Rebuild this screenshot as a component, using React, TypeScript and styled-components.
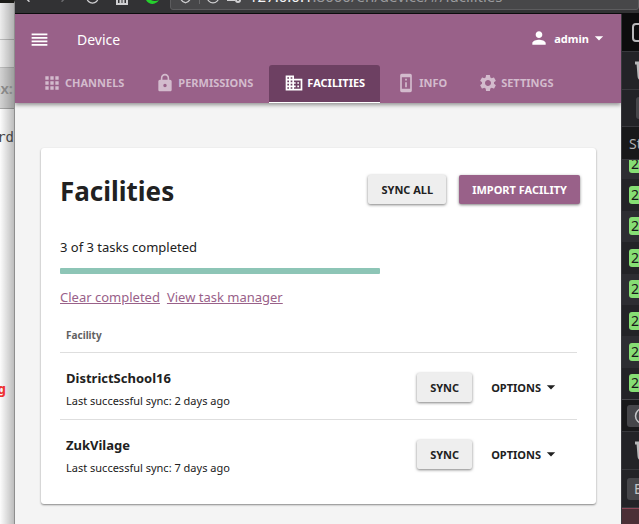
import React from 'react';
import styled, { createGlobalStyle } from 'styled-components';
import {
  MdApps, MdArrowDropDown, MdBusiness, MdLock, MdPermDeviceInformation, MdPerson, MdReorder, MdSettings,
} from 'react-icons/md';
import { ArrowLeft, ArrowRight, Info, RotateCw, Shield } from 'lucide-react';

const brand = '#996189';
const ink = '#212121';

const GlobalStyle = createGlobalStyle`
  *, *::before, *::after { box-sizing: border-box; }
  body { margin: 0; font-family: "Noto Sans", sans-serif; font-size: 13px; color: ${ink}; background: #f4f4f4; }
  button { font-family: inherit; margin: 0; border: 0; cursor: pointer; }
  h1, h2, p { margin: 0; }
  svg { flex: none; }
`;

const Desktop = styled.div`
  display: grid;
  grid-template-columns: 15px minmax(0, 1fr);
  height: 100vh;
  overflow: hidden;
`;

/* Window behind, mostly covered */
const BackWindow = styled.aside`
  display: flex;
  flex-direction: column;
  border-top: 3px solid #1c1c18;
  border-right: 1px solid #8e8e8e;
  background: linear-gradient(to right, transparent, rgba(0, 0, 0, 0.25)), #fcfcfc;
  overflow: hidden;
`;
const BackBar = styled.div<{ $h: number; $dark?: boolean }>`
  display: flex;
  align-items: center;
  justify-content: flex-end;
  flex: none;
  height: ${p => p.$h}px;
  background: ${p => (p.$dark ? 'rgba(0, 0, 0, 0.16)' : 'rgba(0, 0, 0, 0.06)')};
  border-bottom: 1px solid rgba(0, 0, 0, 0.2);
  color: #888;
  font-weight: 600;
  font-size: 15px;
  padding-right: 1px;
`;
const BackText = styled.p<{ $alert?: boolean }>`
  display: flex;
  justify-content: flex-end;
  flex: none;
  height: ${p => (p.$alert ? 20 : 271)}px;
  padding: ${p => (p.$alert ? '0 8px 0 0' : '19px 0 0')};
  font: ${p => (p.$alert ? 'bold' : 'normal')} 14px/18px "DejaVu Sans Mono", monospace;
  color: ${p => (p.$alert ? '#e33' : '#444')};
`;

const Window = styled.div`
  display: flex;
  flex-direction: column;
  min-width: 0;
`;
const Chrome = styled.div`
  display: flex;
  align-items: flex-end;
  flex: none;
  height: 14px;
  overflow: hidden;
  background: #323234;
  border-bottom: 1px solid #0c0c0d;
  color: #d0d0d2;
`;
const ChromeTools = styled.div`
  display: flex;
  align-items: flex-end;
  justify-content: space-between;
  flex: none;
  width: 155px;
  padding: 0 9px 8px 5px;
`;
const ChromeButton = styled.button<{ $dim?: boolean }>`
  display: flex;
  padding: 0;
  background: none;
  color: ${p => (p.$dim ? '#6c6c6f' : '#d0d0d2')};
`;
const UrlBar = styled.div`
  display: flex;
  align-items: flex-end;
  flex: 1;
  gap: 6px;
  height: 32px;
  margin-bottom: 3px;
  padding: 0 7px 5px;
  background: #474749;
  border: 1px solid #5c5c5e;
  border-radius: 3px;
  overflow: hidden;
`;
const UrlDivider = styled.span`
  width: 1px;
  height: 20px;
  background: #6a6a6c;
`;
const Url = styled.span`
  margin-left: 2px;
  font-size: 15px;
  line-height: 16px;
  color: #9b9b9e;
  white-space: nowrap;
`;
const UrlHost = styled.span`
  color: #f4f4f6;
`;

const Body = styled.div`
  display: flex;
  flex: 1;
  min-height: 0;
`;
const Page = styled.div`
  flex: 1;
  min-width: 0;
  background: #f4f4f4;
  overflow: hidden;
`;

const AppBar = styled.header`
  background: ${brand};
  color: #fff;
  box-shadow: 0 2px 4px rgba(0, 0, 0, 0.4);
`;
const Toolbar = styled.div`
  display: flex;
  align-items: center;
  height: 51px;
  padding: 0 12px 0 14px;
`;
const IconButton = styled.button`
  display: flex;
  padding: 0;
  color: inherit;
  background: none;
`;
const AppTitle = styled.h2`
  flex: 1;
  margin-left: 27px;
  font-size: 14px;
  font-weight: 400;
`;
const UserButton = styled.button`
  display: flex;
  align-items: center;
  gap: 5px;
  height: 30px;
  margin-bottom: 3px;
  padding: 0;
  background: none;
  color: #fff;
  font-size: 11px;
  font-weight: 700;
`;
const UserName = styled.span`
  display: flex;
  align-items: center;
`;

const Tabs = styled.nav`
  display: flex;
  gap: 1px;
  padding-left: 12px;
`;
const Tab = styled.a<{ $active?: boolean }>`
  display: flex;
  align-items: center;
  gap: 3px;
  height: 38px;
  padding: 0 15px 2px;
  border-radius: 3px 3px 0 0;
  border-bottom: 1px solid ${p => (p.$active ? '#fff' : 'transparent')};
  background: ${p => (p.$active ? '#6d4062' : 'transparent')};
  color: ${p => (p.$active ? '#fff' : '#d3bbcd')};
  font-size: 11px;
  font-weight: 700;
  text-decoration: none;
  white-space: nowrap;
`;

const Card = styled.main`
  margin: 45px 25px 20px 26px;
  padding: 27px 16px 18px 19px;
  background: #fff;
  border-radius: 3px;
  box-shadow: 0 1px 2px rgba(0, 0, 0, 0.45);
`;
const CardHeader = styled.div`
  display: flex;
  align-items: flex-start;
  gap: 13px;
`;
const Title = styled.h1`
  flex: 1;
  font-size: 26px;
  line-height: 32px;
`;
const Button = styled.button<{ $primary?: boolean }>`
  height: 29px;
  padding: 0 13px;
  border-radius: 2px;
  background: ${p => (p.$primary ? brand : '#eee')};
  color: ${p => (p.$primary ? '#fff' : ink)};
  box-shadow: 0 1px 3px rgba(0, 0, 0, 0.5);
  font-size: 11px;
  font-weight: 700;
  white-space: nowrap;
`;
const FlatButton = styled.button`
  display: flex;
  align-items: center;
  height: 29px;
  padding: 0;
  background: none;
  color: ${ink};
  font-size: 11px;
  font-weight: 700;
`;
const Status = styled.p`
  margin-top: 30px;
  line-height: 20px;
`;
const Progress = styled.div`
  width: 320px;
  max-width: 100%;
  height: 6px;
  margin-top: 11px;
  border-radius: 1px;
  background: #8dc5b6;
`;
const Links = styled.div`
  display: flex;
  gap: 7px;
  margin-top: 13px;
  line-height: 20px;
`;
const Link = styled.a`
  color: ${brand};
`;

const Table = styled.table`
  width: calc(100% - 3px);
  margin-top: 12px;
  border-collapse: collapse;
`;
const HeadCell = styled.th`
  height: 33px;
  padding: 0 6px;
  color: #616161;
  font-size: 10px;
  text-align: left;
`;
const Row = styled.tr`
  border-top: 1px solid #dedede;
`;
const Cell = styled.td<{ $text?: boolean }>`
  height: 67px;
  padding: ${p => (p.$text ? 7 : 3)}px 6px 0;
`;
const Name = styled.div`
  font-weight: 700;
  line-height: 20px;
`;
const Note = styled.div`
  margin-top: 4px;
  font-size: 11px;
  line-height: 18px;
`;
const Actions = styled.div`
  display: flex;
  align-items: center;
  justify-content: flex-end;
  gap: 19px;
  padding-right: 10px;
`;

/* Developer tools panel docked right */
const DevTools = styled.aside`
  display: flex;
  flex-direction: column;
  flex: none;
  width: 18px;
  border-left: 1px solid #38383d;
  background: #232327;
  overflow: hidden;
`;
const Pane = styled.div<{ $h: number; $bg?: string; $inset?: number }>`
  display: flex;
  align-items: center;
  flex: none;
  height: ${p => p.$h}px;
  padding-left: ${p => p.$inset || 7}px;
  border-bottom: 1px solid #38383d;
  background: ${p => p.$bg || '#232327'};
  color: #b1b1b3;
  font-size: 14px;
  white-space: nowrap;
`;
const Requests = styled.div`
  display: flex;
  align-items: flex-end;
  flex: none;
  height: 240px;
  overflow: hidden;
  border-bottom: 1px solid #48484c;
`;
const RequestList = styled.div`
  display: flex;
  flex: 1;
  flex-direction: column;
  height: 251px;
`;
const Request = styled.div`
  display: flex;
  align-items: center;
  flex: 1;
  padding-left: 7px;
  &:nth-child(odd) { background: #2d2d32; }
`;
const Badge = styled.span`
  flex: none;
  width: 30px;
  height: 18px;
  padding-left: 2px;
  border-radius: 3px;
  background: #86de74;
  color: #18181a;
  font-size: 14px;
  line-height: 18px;
`;
const Field = styled.div`
  display: flex;
  align-items: center;
  flex: none;
  width: 40px;
  height: 22px;
  padding-left: 7px;
  border-radius: 3px;
  background: #46464a;
  color: #c4c4c6;
`;
const ErrorPane = styled.div`
  flex: 1;
  border-top: 1px solid #8c4656;
  background: #4b2f36;
`;

const Moon = () => (
  <svg width="18" height="18" viewBox="0 0 18 18">
    <path d="M3 6a7 7 0 1 0 13 7A9 9 0 0 1 3 6z" fill="#25d02d" />
  </svg>
);
const HomeBase = () => (
  <svg width="14" height="16" viewBox="0 0 14 16">
    <path d="M2 6v9h10V6M5.500 15v-5h3v5" fill="none" stroke="currentColor" strokeWidth="2" />
  </svg>
);
const Sliders = () => (
  <svg width="15" height="14" viewBox="0 0 15 14" fill="none" stroke="currentColor" strokeWidth="2">
    <path d="M6 4h8M1 10h8" />
    <circle cx="3" cy="4" r="2" />
    <circle cx="12" cy="10" r="2" />
  </svg>
);
const Trash = () => (
  <svg width="18" height="20" viewBox="0 0 18 20" fill="none" stroke="#b8b8ba" strokeWidth="3">
    <path d="M0 2h18M3 2l1 13q0 3 3 3h4q3 0 3-3l1-13" />
  </svg>
);
const Frame = () => (
  <svg width="20" height="20" viewBox="0 0 20 20" fill="none" stroke="#b8b8ba" strokeWidth="2">
    <rect x="1" y="1" width="18" height="17" rx="3" />
  </svg>
);

const tabs = [
  { label: 'CHANNELS', Icon: MdApps },
  { label: 'PERMISSIONS', Icon: MdLock },
  { label: 'FACILITIES', Icon: MdBusiness, active: true },
  { label: 'INFO', Icon: MdPermDeviceInformation },
  { label: 'SETTINGS', Icon: MdSettings },
];
const facilities = [
  { name: 'DistrictSchool16', note: 'Last successful sync: 2 days ago' },
  { name: 'ZukVilage', note: 'Last successful sync: 7 days ago' },
];

export default function App() {
  return (
    <>
      <GlobalStyle />
      <Desktop>
        <BackWindow>
          <BackBar $h={37} />
          <BackBar $h={28} />
          <BackBar $h={41} $dark>ox:</BackBar>
          <BackText>rd</BackText>
          <BackText $alert>g</BackText>
        </BackWindow>
        <Window>
          <Chrome>
            <ChromeTools>
              <ChromeButton aria-label="Back"><ArrowLeft size={18} /></ChromeButton>
              <ChromeButton aria-label="Forward" $dim><ArrowRight size={18} /></ChromeButton>
              <ChromeButton aria-label="Reload"><RotateCw size={15} /></ChromeButton>
              <ChromeButton aria-label="Home"><HomeBase /></ChromeButton>
              <ChromeButton aria-label="Night mode"><Moon /></ChromeButton>
            </ChromeTools>
            <UrlBar>
              <Shield size={15} />
              <UrlDivider />
              <Info size={14} />
              <Sliders />
              <Url><UrlHost>127.0.0.1</UrlHost>:8000/en/device/#/facilities</Url>
            </UrlBar>
          </Chrome>
          <Body>
            <Page>
              <AppBar>
                <Toolbar>
                  <IconButton aria-label="Menu"><MdReorder size={21} /></IconButton>
                  <AppTitle>Device</AppTitle>
                  <UserButton>
                    <MdPerson size={20} />
                    <UserName>admin<MdArrowDropDown size={20} /></UserName>
                  </UserButton>
                </Toolbar>
                <Tabs>
                  {tabs.map(({ label, Icon, active }) => (
                    <Tab key={label} href="#" $active={active} aria-current={active ? 'page' : undefined}>
                      <Icon size={20} />
                      {label}
                    </Tab>
                  ))}
                </Tabs>
              </AppBar>
              <Card>
                <CardHeader>
                  <Title>Facilities</Title>
                  <Button>SYNC ALL</Button>
                  <Button $primary>IMPORT FACILITY</Button>
                </CardHeader>
                <Status>3 of 3 tasks completed</Status>
                <Progress role="progressbar" aria-label="Tasks" aria-valuenow={100} />
                <Links>
                  <Link href="#">Clear completed</Link>
                  <Link href="#">View task manager</Link>
                </Links>
                <Table>
                  <thead>
                    <tr><HeadCell colSpan={2}>Facility</HeadCell></tr>
                  </thead>
                  <tbody>
                    {facilities.map(f => (
                      <Row key={f.name}>
                        <Cell $text>
                          <Name>{f.name}</Name>
                          <Note>{f.note}</Note>
                        </Cell>
                        <Cell>
                          <Actions>
                            <Button>SYNC</Button>
                            <FlatButton>OPTIONS<MdArrowDropDown size={20} /></FlatButton>
                          </Actions>
                        </Cell>
                      </Row>
                    ))}
                  </tbody>
                </Table>
              </Card>
            </Page>
            <DevTools>
              <Pane $h={38} $bg="#0c0c0d" $inset={10}><Frame /></Pane>
              <Pane $h={38} $inset={13}><Trash /></Pane>
              <Pane $h={37} $inset={14}><Field /></Pane>
              <Pane $h={33} $bg="#18181a">Status</Pane>
              <Requests>
                <RequestList>
                  {Array.from({ length: 8 }, (_, i) => (
                    <Request key={i}><Badge>200</Badge></Request>
                  ))}
                </RequestList>
              </Requests>
              <Pane $h={32} $bg="#18181a" $inset={5}><Field><Info size={18} /></Field></Pane>
              <Pane $h={38} $inset={13}><Trash /></Pane>
              <Pane $h={38} $inset={5}><Field>Errors</Field></Pane>
              <ErrorPane />
            </DevTools>
          </Body>
        </Window>
      </Desktop>
    </>
  );
}
